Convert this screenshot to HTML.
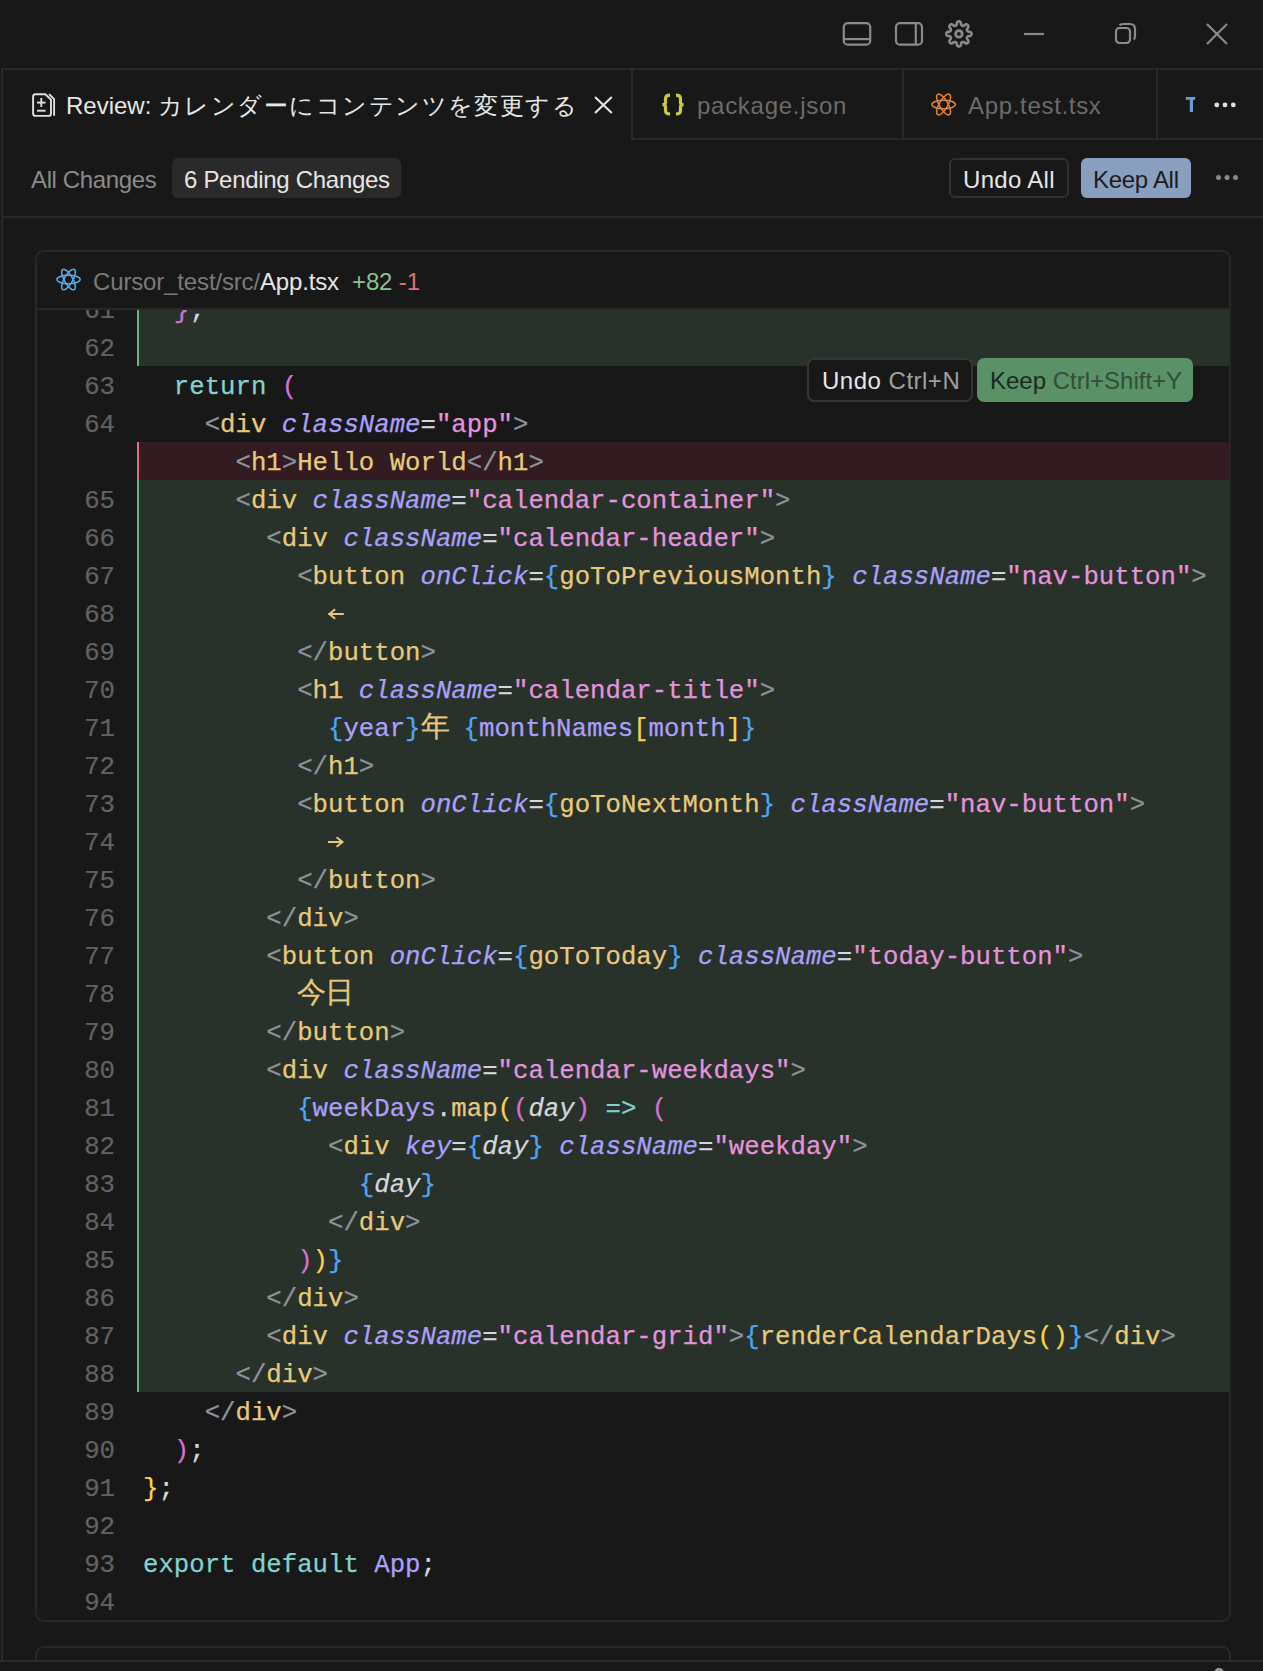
<!DOCTYPE html>
<html><head><meta charset="utf-8">
<style>
*{box-sizing:border-box;margin:0;padding:0}
html,body{width:1263px;height:1671px;overflow:hidden;background:#181818}
body{position:relative;font-family:"Liberation Sans",sans-serif;color:#d6d6d6}
.abs{position:absolute}
.ui{font-family:"Liberation Sans",sans-serif;font-size:24px;line-height:30px;white-space:nowrap}
.hline{position:absolute;height:2px;background:#282828}
.vline{position:absolute;width:2px;background:#282828}
#code{position:absolute;left:37px;top:310px;width:1192px;height:1310px;overflow:hidden}
.row{position:absolute;left:0;width:1192px;height:38px}
.ln{position:absolute;top:3px;-webkit-text-stroke:0.2px currentColor;left:0;width:78px;text-align:right;font-family:"Liberation Mono",monospace;font-size:25.7px;line-height:38px;color:#626262}
.tx{position:absolute;top:3px;-webkit-text-stroke:0.25px currentColor;left:106px;font-family:"Liberation Mono",monospace;font-size:25.7px;line-height:38px;white-space:pre;color:#d6d6dd}
.add:before{content:"";position:absolute;left:100px;top:0;width:1092px;height:38px;background:#28312a;border-left:2px solid #6bb57c}
.del:before{content:"";position:absolute;left:100px;top:0;width:1092px;height:38px;background:#321c22;border-left:2px solid #e0707f}
.g{color:#8c949c}  /* punctuation < > */
.t{color:#e7c97c}  /* tag names / funcs */
.a{color:#aaa0fa;font-style:italic} /* attrs */
.s{color:#e394dc}  /* strings */
.b{color:#4fa6f5}  /* braces */
.k{color:#82d2ce}  /* keywords */
.v{color:#aaa0fa}  /* vars */
.y{color:#f8d34a}  /* yellow bracket */
.p{color:#d670d6}  /* pink bracket */
.w{color:#d6d6dd}
.i{font-style:italic}
.cjc{display:inline-block;width:27.7px;font-size:28.5px;line-height:38px;vertical-align:top;position:relative;top:-1px}
</style></head><body>

<!-- title bar icons -->
<svg class="abs" style="left:0;top:0" width="1263" height="310" viewBox="0 0 1263 310">
  <g fill="none" stroke="#8a8a8a" stroke-width="2.2">
    <rect x="843.8" y="23.1" width="26.4" height="21.6" rx="4"/>
    <line x1="843.8" y1="39.1" x2="870.2" y2="39.1"/>
    <rect x="896" y="23.1" width="26" height="21.6" rx="4"/>
    <line x1="915.8" y1="23.1" x2="915.8" y2="44.7"/>
    <path d="M971.50 33.90 L971.49 34.06 L971.47 34.23 L971.44 34.39 L971.39 34.55 L971.33 34.71 L971.25 34.87 L971.16 35.03 L971.06 35.18 L970.93 35.32 L970.80 35.47 L970.64 35.60 L970.45 35.73 L970.23 35.85 L969.96 35.95 L969.39 35.99 L968.83 36.01 L968.55 36.08 L968.34 36.17 L968.15 36.25 L967.98 36.33 L967.83 36.42 L967.70 36.51 L967.58 36.59 L967.47 36.68 L967.37 36.78 L967.28 36.87 L967.20 36.96 L967.14 37.06 L967.08 37.16 L967.03 37.27 L966.99 37.38 L966.96 37.49 L966.94 37.61 L966.93 37.73 L966.92 37.86 L966.93 37.99 L966.94 38.13 L966.96 38.28 L967.00 38.44 L967.04 38.60 L967.10 38.78 L967.17 38.97 L967.27 39.18 L967.41 39.43 L967.80 39.84 L968.17 40.27 L968.29 40.54 L968.36 40.77 L968.40 41.00 L968.42 41.20 L968.42 41.40 L968.40 41.59 L968.37 41.77 L968.32 41.95 L968.26 42.11 L968.20 42.27 L968.11 42.42 L968.02 42.56 L967.92 42.69 L967.81 42.81 L967.69 42.92 L967.56 43.02 L967.42 43.11 L967.27 43.20 L967.11 43.26 L966.95 43.32 L966.77 43.37 L966.59 43.40 L966.40 43.42 L966.20 43.42 L966.00 43.40 L965.77 43.36 L965.54 43.29 L965.27 43.17 L964.84 42.80 L964.43 42.41 L964.18 42.27 L963.97 42.17 L963.78 42.10 L963.60 42.04 L963.44 42.00 L963.28 41.96 L963.13 41.94 L962.99 41.93 L962.86 41.92 L962.73 41.93 L962.61 41.94 L962.49 41.96 L962.38 41.99 L962.27 42.03 L962.16 42.08 L962.06 42.14 L961.96 42.20 L961.87 42.28 L961.78 42.37 L961.68 42.47 L961.59 42.58 L961.51 42.70 L961.42 42.83 L961.33 42.98 L961.25 43.15 L961.17 43.34 L961.08 43.55 L961.01 43.83 L960.99 44.39 L960.95 44.96 L960.85 45.23 L960.73 45.45 L960.60 45.64 L960.47 45.80 L960.32 45.93 L960.18 46.06 L960.03 46.16 L959.87 46.25 L959.71 46.33 L959.55 46.39 L959.39 46.44 L959.23 46.47 L959.06 46.49 L958.90 46.50 L958.74 46.49 L958.57 46.47 L958.41 46.44 L958.25 46.39 L958.09 46.33 L957.93 46.25 L957.77 46.16 L957.62 46.06 L957.48 45.93 L957.33 45.80 L957.20 45.64 L957.07 45.45 L956.95 45.23 L956.85 44.96 L956.81 44.39 L956.79 43.83 L956.72 43.55 L956.63 43.34 L956.55 43.15 L956.47 42.98 L956.38 42.83 L956.29 42.70 L956.21 42.58 L956.12 42.47 L956.02 42.37 L955.93 42.28 L955.84 42.20 L955.74 42.14 L955.64 42.08 L955.53 42.03 L955.42 41.99 L955.31 41.96 L955.19 41.94 L955.07 41.93 L954.94 41.92 L954.81 41.93 L954.67 41.94 L954.52 41.96 L954.36 42.00 L954.20 42.04 L954.02 42.10 L953.83 42.17 L953.62 42.27 L953.37 42.41 L952.96 42.80 L952.53 43.17 L952.26 43.29 L952.03 43.36 L951.80 43.40 L951.60 43.42 L951.40 43.42 L951.21 43.40 L951.03 43.37 L950.85 43.32 L950.69 43.26 L950.53 43.20 L950.38 43.11 L950.24 43.02 L950.11 42.92 L949.99 42.81 L949.88 42.69 L949.78 42.56 L949.69 42.42 L949.60 42.27 L949.54 42.11 L949.48 41.95 L949.43 41.77 L949.40 41.59 L949.38 41.40 L949.38 41.20 L949.40 41.00 L949.44 40.77 L949.51 40.54 L949.63 40.27 L950.00 39.84 L950.39 39.43 L950.53 39.18 L950.63 38.97 L950.70 38.78 L950.76 38.60 L950.80 38.44 L950.84 38.28 L950.86 38.13 L950.87 37.99 L950.88 37.86 L950.87 37.73 L950.86 37.61 L950.84 37.49 L950.81 37.38 L950.77 37.27 L950.72 37.16 L950.66 37.06 L950.60 36.96 L950.52 36.87 L950.43 36.78 L950.33 36.68 L950.22 36.59 L950.10 36.51 L949.97 36.42 L949.82 36.33 L949.65 36.25 L949.46 36.17 L949.25 36.08 L948.97 36.01 L948.41 35.99 L947.84 35.95 L947.57 35.85 L947.35 35.73 L947.16 35.60 L947.00 35.47 L946.87 35.32 L946.74 35.18 L946.64 35.03 L946.55 34.87 L946.47 34.71 L946.41 34.55 L946.36 34.39 L946.33 34.23 L946.31 34.06 L946.30 33.90 L946.31 33.74 L946.33 33.57 L946.36 33.41 L946.41 33.25 L946.47 33.09 L946.55 32.93 L946.64 32.77 L946.74 32.62 L946.87 32.48 L947.00 32.33 L947.16 32.20 L947.35 32.07 L947.57 31.95 L947.84 31.85 L948.41 31.81 L948.97 31.79 L949.25 31.72 L949.46 31.63 L949.65 31.55 L949.82 31.47 L949.97 31.38 L950.10 31.29 L950.22 31.21 L950.33 31.12 L950.43 31.02 L950.52 30.93 L950.60 30.84 L950.66 30.74 L950.72 30.64 L950.77 30.53 L950.81 30.42 L950.84 30.31 L950.86 30.19 L950.87 30.07 L950.88 29.94 L950.87 29.81 L950.86 29.67 L950.84 29.52 L950.80 29.36 L950.76 29.20 L950.70 29.02 L950.63 28.83 L950.53 28.62 L950.39 28.37 L950.00 27.96 L949.63 27.53 L949.51 27.26 L949.44 27.03 L949.40 26.80 L949.38 26.60 L949.38 26.40 L949.40 26.21 L949.43 26.03 L949.48 25.85 L949.54 25.69 L949.60 25.53 L949.69 25.38 L949.78 25.24 L949.88 25.11 L949.99 24.99 L950.11 24.88 L950.24 24.78 L950.38 24.69 L950.53 24.60 L950.69 24.54 L950.85 24.48 L951.03 24.43 L951.21 24.40 L951.40 24.38 L951.60 24.38 L951.80 24.40 L952.03 24.44 L952.26 24.51 L952.53 24.63 L952.96 25.00 L953.37 25.39 L953.62 25.53 L953.83 25.63 L954.02 25.70 L954.20 25.76 L954.36 25.80 L954.52 25.84 L954.67 25.86 L954.81 25.87 L954.94 25.88 L955.07 25.87 L955.19 25.86 L955.31 25.84 L955.42 25.81 L955.53 25.77 L955.64 25.72 L955.74 25.66 L955.84 25.60 L955.93 25.52 L956.02 25.43 L956.12 25.33 L956.21 25.22 L956.29 25.10 L956.38 24.97 L956.47 24.82 L956.55 24.65 L956.63 24.46 L956.72 24.25 L956.79 23.97 L956.81 23.41 L956.85 22.84 L956.95 22.57 L957.07 22.35 L957.20 22.16 L957.33 22.00 L957.48 21.87 L957.62 21.74 L957.77 21.64 L957.93 21.55 L958.09 21.47 L958.25 21.41 L958.41 21.36 L958.57 21.33 L958.74 21.31 L958.90 21.30 L959.06 21.31 L959.23 21.33 L959.39 21.36 L959.55 21.41 L959.71 21.47 L959.87 21.55 L960.03 21.64 L960.18 21.74 L960.32 21.87 L960.47 22.00 L960.60 22.16 L960.73 22.35 L960.85 22.57 L960.95 22.84 L960.99 23.41 L961.01 23.97 L961.08 24.25 L961.17 24.46 L961.25 24.65 L961.33 24.82 L961.42 24.97 L961.51 25.10 L961.59 25.22 L961.68 25.33 L961.78 25.43 L961.87 25.52 L961.96 25.60 L962.06 25.66 L962.16 25.72 L962.27 25.77 L962.38 25.81 L962.49 25.84 L962.61 25.86 L962.73 25.87 L962.86 25.88 L962.99 25.87 L963.13 25.86 L963.28 25.84 L963.44 25.80 L963.60 25.76 L963.78 25.70 L963.97 25.63 L964.18 25.53 L964.43 25.39 L964.84 25.00 L965.27 24.63 L965.54 24.51 L965.77 24.44 L966.00 24.40 L966.20 24.38 L966.40 24.38 L966.59 24.40 L966.77 24.43 L966.95 24.48 L967.11 24.54 L967.27 24.60 L967.42 24.69 L967.56 24.78 L967.69 24.88 L967.81 24.99 L967.92 25.11 L968.02 25.24 L968.11 25.38 L968.20 25.53 L968.26 25.69 L968.32 25.85 L968.37 26.03 L968.40 26.21 L968.42 26.40 L968.42 26.60 L968.40 26.80 L968.36 27.03 L968.29 27.26 L968.17 27.53 L967.80 27.96 L967.41 28.37 L967.27 28.62 L967.17 28.83 L967.10 29.02 L967.04 29.20 L967.00 29.36 L966.96 29.52 L966.94 29.67 L966.93 29.81 L966.92 29.94 L966.93 30.07 L966.94 30.19 L966.96 30.31 L966.99 30.42 L967.03 30.53 L967.08 30.64 L967.14 30.74 L967.20 30.84 L967.28 30.93 L967.37 31.02 L967.47 31.12 L967.58 31.21 L967.70 31.29 L967.83 31.38 L967.98 31.47 L968.15 31.55 L968.34 31.63 L968.55 31.72 L968.83 31.79 L969.39 31.81 L969.96 31.85 L970.23 31.95 L970.45 32.07 L970.64 32.20 L970.80 32.33 L970.93 32.48 L971.06 32.62 L971.16 32.77 L971.25 32.93 L971.33 33.09 L971.39 33.25 L971.44 33.41 L971.47 33.57 L971.49 33.74Z" stroke-width="2.6"/>
    <circle cx="958.9" cy="33.9" r="3.3" stroke-width="2.8"/>
    <line x1="1024" y1="34" x2="1044" y2="34"/>
    <rect x="1116" y="28" width="14" height="15" rx="3.5"/>
    <path d="M1119.5 25.2 Q1120.5 24 1123 24 L1130 24 Q1135 24 1135 29 L1135 36 Q1135 38.5 1133.8 39.5"/>
    <line x1="1207" y1="24" x2="1227" y2="44"/>
    <line x1="1227" y1="24" x2="1207" y2="44"/>
  </g>
  <!-- review doc icon -->
  <g fill="none" stroke="#e0e0e0" stroke-width="1.9" stroke-linejoin="round">
    <path d="M45.3 94.2 L35.5 94.2 Q33.1 94.2 33.1 96.6 L33.1 113.5 Q33.1 115.9 35.5 115.9 L48.6 115.9 Q51 115.9 51 113.5 L51 99.6 Z"/>
    <path d="M49.1 94.2 L54.1 99.2 L54.1 115.7"/>
    <line x1="37" y1="102.6" x2="45.6" y2="102.6"/>
    <line x1="41.3" y1="98" x2="41.3" y2="106.9"/>
    <line x1="37" y1="110.7" x2="45.6" y2="110.7"/>
  </g>
  <!-- close x -->
  <g stroke="#e6e6e6" stroke-width="2.1">
    <line x1="595" y1="97" x2="611.8" y2="113"/>
    <line x1="611.8" y1="97" x2="595" y2="113"/>
  </g>
  <!-- json braces -->
  <g fill="none" stroke="#cbcb41" stroke-width="3.2" stroke-linecap="butt">
    <path d="M670 95.2 Q665.5 95.2 665.5 99 L665.5 102.5 Q665.5 104.6 662.5 104.6 Q665.5 104.6 665.5 106.7 L665.5 110.2 Q665.5 114 670 114"/>
    <path d="M676 95.2 Q680.5 95.2 680.5 99 L680.5 102.5 Q680.5 104.6 683.5 104.6 Q680.5 104.6 680.5 106.7 L680.5 110.2 Q680.5 114 676 114"/>
  </g>
  <!-- react orange -->
  <g fill="none" stroke="#e3843a" stroke-width="1.45">
    <ellipse cx="943.6" cy="104.5" rx="11.8" ry="4.3"/>
    <ellipse cx="943.6" cy="104.5" rx="11.8" ry="4.3" transform="rotate(60 943.6 104.5)"/>
    <ellipse cx="943.6" cy="104.5" rx="11.8" ry="4.3" transform="rotate(-60 943.6 104.5)"/>
  </g>
  <!-- T -->
  <g fill="#6a9fd4">
    <rect x="1185.8" y="97" width="9.4" height="2.8"/>
    <rect x="1189.8" y="97" width="3.2" height="15"/>
  </g>
  <g fill="#e0e0e0">
    <circle cx="1216.8" cy="104.9" r="2.4"/><circle cx="1225" cy="104.9" r="2.4"/><circle cx="1233.3" cy="104.9" r="2.4"/>
  </g>
  <g fill="#8a8a8a">
    <circle cx="1218.5" cy="177.6" r="2.5"/><circle cx="1227" cy="177.6" r="2.5"/><circle cx="1235.5" cy="177.6" r="2.5"/>
  </g>
  <!-- react blue -->
  <g fill="none" stroke="#5aa9e6" stroke-width="1.5">
    <ellipse cx="68.5" cy="279.5" rx="11.6" ry="4.2"/>
    <ellipse cx="68.5" cy="279.5" rx="11.6" ry="4.2" transform="rotate(60 68.5 279.5)"/>
    <ellipse cx="68.5" cy="279.5" rx="11.6" ry="4.2" transform="rotate(-60 68.5 279.5)"/>
  </g>
</svg>

<!-- tab bar -->
<div class="hline" style="left:1px;top:68px;width:1262px"></div>
<div class="vline" style="left:1px;top:68px;height:1594px"></div>
<div class="vline" style="left:631px;top:68px;height:72px"></div>
<div class="vline" style="left:902px;top:68px;height:72px"></div>
<div class="vline" style="left:1156px;top:68px;height:72px"></div>
<div class="hline" style="left:631px;top:138px;width:632px"></div>

<div class="ui abs" style="left:66px;top:91px;color:#e6e6e6">Review: <span style="letter-spacing:1.45px">カレンダーにコンテンツを変更する</span></div>
<div class="ui abs" style="left:697px;top:91px;color:#6b6b6b;letter-spacing:0.72px">package.json</div>
<div class="ui abs" style="left:968px;top:91px;color:#6b6b6b;letter-spacing:0.68px">App.test.tsx</div>

<!-- toolbar -->
<div class="ui abs" style="left:31px;top:165px;color:#8a8a8a;letter-spacing:-0.37px">All Changes</div>
<div class="abs" style="left:172px;top:158px;width:229px;height:40px;border-radius:6px;background:#2a2a2a"></div>
<div class="ui abs" style="left:184px;top:165px;color:#e6e6e6;letter-spacing:-0.3px">6 Pending Changes</div>
<div class="abs" style="left:949px;top:158px;width:120px;height:40px;border-radius:6px;border:2px solid #303030"></div>
<div class="ui abs" style="left:963px;top:165px;color:#e6e6e6;letter-spacing:0.3px">Undo All</div>
<div class="abs" style="left:1081px;top:158px;width:110px;height:40px;border-radius:6px;background:#8a9fc0"></div>
<div class="ui abs" style="left:1093px;top:165px;color:#1c1c1c;letter-spacing:-0.3px">Keep All</div>
<div class="hline" style="left:1px;top:216px;width:1262px"></div>

<!-- diff box -->
<div class="abs" style="left:35px;top:250px;width:1196px;height:1372px;border:2px solid #282828;border-radius:9px"></div>
<div class="hline" style="left:37px;top:308px;width:1192px"></div>
<div class="ui abs" style="left:93px;top:267px;color:#7a7a7a;letter-spacing:-0.15px">Cursor_test/src/<span style="color:#e6e6e6">App.tsx</span> &nbsp;<span style="color:#8fc08f">+82</span> <span style="color:#e07070">-1</span></div>

<div id="code">
<div class="row add" style="top:-20px"><span class="ln">61</span><span class="tx">  <span class="p">}</span><span class="w">;</span></span></div>
<div class="row add" style="top:18px"><span class="ln">62</span><span class="tx"></span></div>
<div class="row " style="top:56px"><span class="ln">63</span><span class="tx">  <span class="k">return</span> <span class="p">(</span></span></div>
<div class="row " style="top:94px"><span class="ln">64</span><span class="tx">    <span class="g">&lt;</span><span class="t">div</span> <span class="a">className</span><span class="w">=</span><span class="s">"app"</span><span class="g">&gt;</span></span></div>
<div class="row del" style="top:132px"><span class="ln"></span><span class="tx">      <span class="g">&lt;</span><span class="t">h1</span><span class="g">&gt;</span><span class="t">Hello World</span><span class="g">&lt;/</span><span class="t">h1</span><span class="g">&gt;</span></span></div>
<div class="row add" style="top:170px"><span class="ln">65</span><span class="tx">      <span class="g">&lt;</span><span class="t">div</span> <span class="a">className</span><span class="w">=</span><span class="s">"calendar-container"</span><span class="g">&gt;</span></span></div>
<div class="row add" style="top:208px"><span class="ln">66</span><span class="tx">        <span class="g">&lt;</span><span class="t">div</span> <span class="a">className</span><span class="w">=</span><span class="s">"calendar-header"</span><span class="g">&gt;</span></span></div>
<div class="row add" style="top:246px"><span class="ln">67</span><span class="tx">          <span class="g">&lt;</span><span class="t">button</span> <span class="a">onClick</span><span class="w">=</span><span class="b">{</span><span class="t">goToPreviousMonth</span><span class="b">}</span> <span class="a">className</span><span class="w">=</span><span class="s">"nav-button"</span><span class="g">&gt;</span></span></div>
<div class="row add" style="top:284px"><span class="ln">68</span><span class="tx">            </span><svg class="arrsvg" width="20" height="38" style="position:absolute;left:288px;top:0"><g fill="none" stroke="#e7c97c" stroke-width="2" stroke-linejoin="miter"><path d="M3.3 20 L18.8 20 M10.2 15.3 L4.3 20 L10.2 24.7"/></g></svg></div>
<div class="row add" style="top:322px"><span class="ln">69</span><span class="tx">          <span class="g">&lt;/</span><span class="t">button</span><span class="g">&gt;</span></span></div>
<div class="row add" style="top:360px"><span class="ln">70</span><span class="tx">          <span class="g">&lt;</span><span class="t">h1</span> <span class="a">className</span><span class="w">=</span><span class="s">"calendar-title"</span><span class="g">&gt;</span></span></div>
<div class="row add" style="top:398px"><span class="ln">71</span><span class="tx">            <span class="b">{</span><span class="v">year</span><span class="b">}</span><span class="t cjc">年</span> <span class="b">{</span><span class="v">monthNames</span><span class="y">[</span><span class="v">month</span><span class="y">]</span><span class="b">}</span></span></div>
<div class="row add" style="top:436px"><span class="ln">72</span><span class="tx">          <span class="g">&lt;/</span><span class="t">h1</span><span class="g">&gt;</span></span></div>
<div class="row add" style="top:474px"><span class="ln">73</span><span class="tx">          <span class="g">&lt;</span><span class="t">button</span> <span class="a">onClick</span><span class="w">=</span><span class="b">{</span><span class="t">goToNextMonth</span><span class="b">}</span> <span class="a">className</span><span class="w">=</span><span class="s">"nav-button"</span><span class="g">&gt;</span></span></div>
<div class="row add" style="top:512px"><span class="ln">74</span><span class="tx">            </span><svg class="arrsvg" width="20" height="38" style="position:absolute;left:288px;top:0"><g fill="none" stroke="#e7c97c" stroke-width="2"><path d="M3 20 L17.8 20 M11.6 15.3 L17.5 20 L11.6 24.7"/></g></svg></div>
<div class="row add" style="top:550px"><span class="ln">75</span><span class="tx">          <span class="g">&lt;/</span><span class="t">button</span><span class="g">&gt;</span></span></div>
<div class="row add" style="top:588px"><span class="ln">76</span><span class="tx">        <span class="g">&lt;/</span><span class="t">div</span><span class="g">&gt;</span></span></div>
<div class="row add" style="top:626px"><span class="ln">77</span><span class="tx">        <span class="g">&lt;</span><span class="t">button</span> <span class="a">onClick</span><span class="w">=</span><span class="b">{</span><span class="t">goToToday</span><span class="b">}</span> <span class="a">className</span><span class="w">=</span><span class="s">"today-button"</span><span class="g">&gt;</span></span></div>
<div class="row add" style="top:664px"><span class="ln">78</span><span class="tx">          <span class="t cjc">今</span><span class="t cjc">日</span></span></div>
<div class="row add" style="top:702px"><span class="ln">79</span><span class="tx">        <span class="g">&lt;/</span><span class="t">button</span><span class="g">&gt;</span></span></div>
<div class="row add" style="top:740px"><span class="ln">80</span><span class="tx">        <span class="g">&lt;</span><span class="t">div</span> <span class="a">className</span><span class="w">=</span><span class="s">"calendar-weekdays"</span><span class="g">&gt;</span></span></div>
<div class="row add" style="top:778px"><span class="ln">81</span><span class="tx">          <span class="b">{</span><span class="v">weekDays</span><span class="w">.</span><span class="t">map</span><span class="y">(</span><span class="p">(</span><span class="w i">day</span><span class="p">)</span> <span class="k">=&gt;</span> <span class="p">(</span></span></div>
<div class="row add" style="top:816px"><span class="ln">82</span><span class="tx">            <span class="g">&lt;</span><span class="t">div</span> <span class="a">key</span><span class="w">=</span><span class="b">{</span><span class="w i">day</span><span class="b">}</span> <span class="a">className</span><span class="w">=</span><span class="s">"weekday"</span><span class="g">&gt;</span></span></div>
<div class="row add" style="top:854px"><span class="ln">83</span><span class="tx">              <span class="b">{</span><span class="w i">day</span><span class="b">}</span></span></div>
<div class="row add" style="top:892px"><span class="ln">84</span><span class="tx">            <span class="g">&lt;/</span><span class="t">div</span><span class="g">&gt;</span></span></div>
<div class="row add" style="top:930px"><span class="ln">85</span><span class="tx">          <span class="p">)</span><span class="y">)</span><span class="b">}</span></span></div>
<div class="row add" style="top:968px"><span class="ln">86</span><span class="tx">        <span class="g">&lt;/</span><span class="t">div</span><span class="g">&gt;</span></span></div>
<div class="row add" style="top:1006px"><span class="ln">87</span><span class="tx">        <span class="g">&lt;</span><span class="t">div</span> <span class="a">className</span><span class="w">=</span><span class="s">"calendar-grid"</span><span class="g">&gt;</span><span class="b">{</span><span class="t">renderCalendarDays</span><span class="y">()</span><span class="b">}</span><span class="g">&lt;/</span><span class="t">div</span><span class="g">&gt;</span></span></div>
<div class="row add" style="top:1044px"><span class="ln">88</span><span class="tx">      <span class="g">&lt;/</span><span class="t">div</span><span class="g">&gt;</span></span></div>
<div class="row " style="top:1082px"><span class="ln">89</span><span class="tx">    <span class="g">&lt;/</span><span class="t">div</span><span class="g">&gt;</span></span></div>
<div class="row " style="top:1120px"><span class="ln">90</span><span class="tx">  <span class="p">)</span><span class="w">;</span></span></div>
<div class="row " style="top:1158px"><span class="ln">91</span><span class="tx"><span class="y">}</span><span class="w">;</span></span></div>
<div class="row " style="top:1196px"><span class="ln">92</span><span class="tx"></span></div>
<div class="row " style="top:1234px"><span class="ln">93</span><span class="tx"><span class="k">export</span> <span class="k">default</span> <span class="v">App</span><span class="w">;</span></span></div>
<div class="row " style="top:1272px"><span class="ln">94</span><span class="tx"></span></div>
</div>


<!-- inline undo/keep widget -->
<div class="abs" style="left:807px;top:358px;width:166px;height:44px;border-radius:7px;border:2px solid #353535;background:#181818"></div>
<div class="ui abs" style="left:822px;top:366px;color:#e6e6e6;letter-spacing:0.5px">Undo <span style="color:#a0a0a0">Ctrl+N</span></div>
<div class="abs" style="left:977px;top:358px;width:216px;height:44px;border-radius:7px;background:#5a9166"></div>
<div class="ui abs" style="left:990px;top:366px;color:#1c2a1f">Keep <span style="color:#30503a">Ctrl+Shift+Y</span></div>

<div class="abs" style="left:0;top:1640px;width:1263px;height:20px;overflow:hidden"><div class="abs" style="left:35px;top:6px;width:1196px;height:40px;border:2px solid #282828;border-radius:9px"></div></div>
<div class="abs" style="left:0;top:1660px;width:1263px;height:2px;background:#2a2a2a"></div>
<div class="abs" style="left:1214px;top:1668px;width:10px;height:10px;border-radius:5px;background:#9a9a9a"></div>

</body></html>
